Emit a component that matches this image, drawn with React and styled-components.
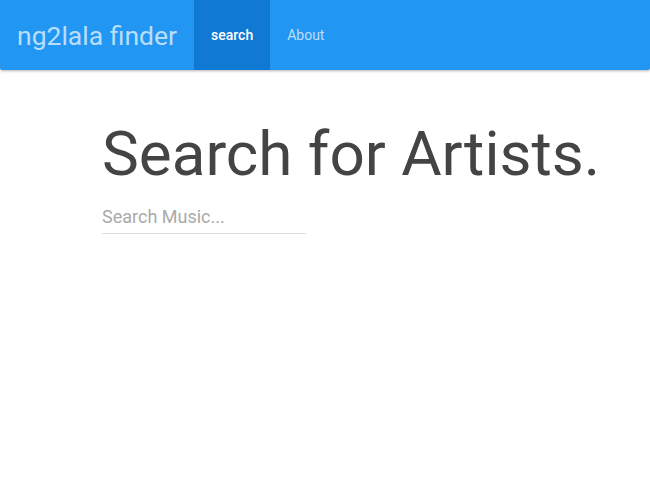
import styled, { createGlobalStyle } from "styled-components";

const GlobalStyle = createGlobalStyle`
  body {
    margin: 0;
    font-family: Roboto, "Liberation Sans", sans-serif;
    background: #fff;
  }
`;

export default function App() {
  return (
    <>
      <GlobalStyle />
      <Navbar>
        <Brand>ng2lala finder</Brand>
        <NavItem $active>search</NavItem>
        <NavItem>About</NavItem>
      </Navbar>
      <Main>
        <Title>Search for Artists.</Title>
        <SearchInput type="text" placeholder="Search Music..." />
      </Main>
    </>
  );
}

const Navbar = styled.nav`
  display: flex;
  align-items: stretch;
  height: 70px;
  background-color: #2196f3;
  box-shadow: 0 1px 3px rgba(0, 0, 0, 0.3);
  border-radius: 0 0 2px 2px;
`;

const Brand = styled.div`
  display: flex;
  align-items: center;
  padding: 0 17px;
  font-size: 26.5px;
  color: rgba(255, 255, 255, 0.7);
`;

const NavItem = styled.a`
  display: flex;
  align-items: center;
  padding: 0 17px;
  font-size: 14px;
  cursor: pointer;
  color: ${(p) => (p.$active ? "#fff" : "rgba(255, 255, 255, 0.7)")};
  font-weight: ${(p) => (p.$active ? 500 : 400)};
  background-color: ${(p) => (p.$active ? "#1079d3" : "transparent")};
`;

const Main = styled.main`
  padding: 0 0 0 102px;
`;

const Title = styled.h1`
  margin: 50px 0 18px;
  font-size: 62px;
  font-weight: 400;
  color: #444;
  line-height: 1.1;
`;

const SearchInput = styled.input`
  width: 204px;
  padding: 0 0 6px;
  border: none;
  border-bottom: 1px solid #ddd;
  font-family: Roboto, "Liberation Sans", sans-serif;
  font-size: 18px;
  color: #444;
  outline: none;

  &::placeholder {
    color: #aaa;
  }
`;
